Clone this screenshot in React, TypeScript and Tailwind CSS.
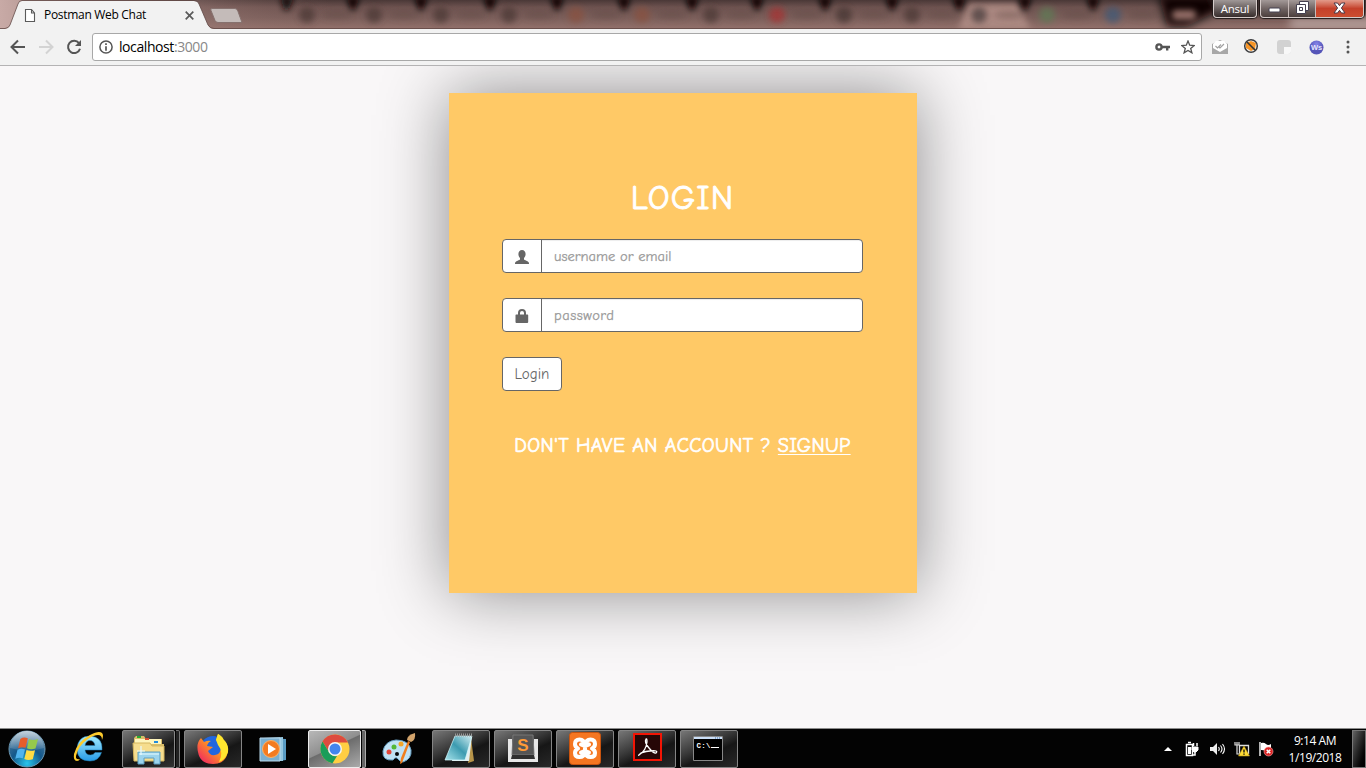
import React from "react";

const ui = "font-['Open_Sans','Noto_Sans',sans-serif]";
const hand = "font-['Comic_Sans_MS','Comic_Neue',Lato,sans-serif]";

const notches = [53, 121, 190, 257, 324, 392, 457, 525, 592, 659, 725, 793];
const tabs = [7, 74, 141, 209, 276, 342, 411, 477, 544, 612, 679, 747, 813];
const tints: Record<number, string> = { 276: "#8a513f", 342: "#89513f", 477: "#a83030", 747: "#5f7a55", 813: "#3f5a78", 679: "#4a3c3c", 544: "#453431" };

function Glass() {
  return (
    <svg className="absolute inset-0" width="1366" height="29" viewBox="0 0 1366 29">
      <defs>
        <linearGradient id="glass" x1="0" y1="0" x2="0" y2="1">
          <stop offset="0" stopColor="#4a3837" />
          <stop offset=".25" stopColor="#6e5350" />
          <stop offset=".6" stopColor="#7a5e5a" />
          <stop offset="1" stopColor="#93716b" />
        </linearGradient>
        <linearGradient id="leftGlow">
          <stop offset="0" stopColor="#c8aaa6" />
          <stop offset="1" stopColor="#8a6964" stopOpacity="0" />
        </linearGradient>
        <filter id="b3" x="-80%" y="-80%" width="260%" height="260%"><feGaussianBlur stdDeviation="3" /></filter>
        <filter id="b5" x="-50%" y="-80%" width="200%" height="260%"><feGaussianBlur stdDeviation="5" /></filter>
      </defs>
      <rect width="1366" height="29" fill="url(#glass)" />
      <rect width="330" height="29" fill="url(#leftGlow)" />
      <g transform="translate(300 0)">
        <path d="M658 30L669 4h48l14 26z" fill="#ac8982" filter="url(#b3)" />
        {tabs.map((x) => (
          <g key={x} filter="url(#b3)" opacity=".75">
            <circle cx={x} cy="15" r="8" fill={tints[x] ?? "#4b3836"} />
            <ellipse cx={x + 30} cy="15" rx="15" ry="4" fill="#5b4542" opacity=".5" />
          </g>
        ))}
        {notches.map((x) => <path key={x} d={`M${x - 7}-3h14l-5 13h-4z`} fill="#0d0505" filter="url(#b3)" />)}
        <path d="M-20-4H-6L-11 10H-16z" fill="#160b0a" filter="url(#b3)" />
      </g>
      <path d="M1159-4h60v14l-32 16h-20z" fill="#0a0504" filter="url(#b5)" />
      <rect x="1172" y="10" width="24" height="10" rx="4" fill="#967069" filter="url(#b3)" />
      <path d="M1210-4h160v18h-145z" fill="#443634" filter="url(#b5)" />
      <rect x="1290" y="18" width="90" height="12" fill="#b39d99" filter="url(#b5)" />
      <path d="M0 29H5Q9 28 10 25L18 4Q19 1 22 1H194Q198 1 199 4L208 25Q210 29 214 29z" fill="#f2f2f2" />
      <path d="M0 28.5H5Q9 28 10 25L18 4Q19 .5 22 .5H194Q198 .5 199 4L208 25Q210 28.5 214 28.500H1366" fill="none" stroke="#5c4442" strokeOpacity=".75" />
      <path d="M212 8.500h23q2 0 3 3l4 11h-24q-2 0-3-2l-4-10q-1-2 1-2z" fill="#c4bbb9" stroke="#86716e" />
    </svg>
  );
}

function TitleBar() {
  return (
    <div className="relative flex h-[29px] shrink-0 overflow-hidden">
      <Glass />
      <div className="relative flex w-[220px] items-center pl-6 pt-[1px]">
        <svg width="12" height="15" viewBox="0 0 12 15" fill="#fff" stroke="#5a5a5a" strokeWidth="1.1"><path d="M1.5 1.5h6l3 3.5v8.500h-9zM7.500 1.500V5h3" /></svg>
        <span className="ml-2 w-[110px] whitespace-nowrap text-[12px] leading-4 tracking-[-0.3px] text-black">Postman Web Chat</span>
        <svg className="ml-[31px]" width="9" height="9" viewBox="0 0 9 9" stroke="#5a5a5a" strokeWidth="1.700"><path d="M.7.7l7.600 7.600M8.300.7L.7 8.300" /></svg>
      </div>
      <div className="relative ml-auto flex h-[18px] pr-[2px] text-white">
        <div className="mr-[3px] flex w-[44px] items-center justify-center rounded-b border border-t-0 border-[#d5cbc9] bg-gradient-to-b from-[#a09897] to-[#382e2d] shadow-[0_0_1px_1px_#211a19] text-[11.5px] leading-none tracking-[-0.3px]">Ansul</div>
        <div className="flex w-[104px] overflow-hidden rounded-b border border-t-0 border-[#d5cbc9] bg-gradient-to-b from-[#a39998] via-[#716564] to-[#4b3e3c] shadow-[0_0_1px_1px_#211a19]">
          <div className="flex w-[28px] items-center justify-center border-r border-[#c6b9b7] pt-[3px]">
            <svg width="13" height="6"><rect x="1" y="1" width="11" height="4" rx="1" fill="#fff" stroke="#454050" /></svg>
          </div>
          <div className="flex w-[27px] items-center justify-center border-r border-[#c6b9b7] pb-[2px]">
            <svg width="13" height="13" viewBox="0 0 13 13" fill="#fff" stroke="#454050"><path d="M3.500.5h9v9h-9z" /><path fillRule="evenodd" d="M.5 3.500h9v9h-9zM3.500 6.500h3v3h-3z" /></svg>
          </div>
          <div className="flex flex-1 items-center justify-center bg-gradient-to-b from-[#e29a8a] via-[#c4402a] to-[#cb4d30] pb-[2px]">
            <svg width="13" height="12" viewBox="0 0 13 12"><path d="M1 1h3.500l2 2.700L8.500 1H12L8.400 6 12 11H8.500l-2-2.700L4.500 11H1l3.600-5z" fill="#fff" stroke="#4a3b4a" /></svg>
          </div>
        </div>
      </div>
    </div>
  );
}

function Toolbar() {
  return (
    <div className="flex h-[37px] shrink-0 items-center border-b border-[#b4b3b4] bg-[#f2f2f2] pr-[11px] pl-[10px]">
      <svg width="16" height="16" viewBox="0 0 16 16" fill="none" stroke="#555" strokeWidth="2"><path d="M15 8H2M8 1.500L1.500 8 8 14.500" /></svg>
      <svg className="ml-3" width="16" height="16" viewBox="0 0 16 16" fill="none" stroke="#d3d3d3" strokeWidth="2"><path d="M1 8h13M8 1.500L14.500 8 8 14.500" /></svg>
      <svg className="ml-3" width="16" height="16" viewBox="0 0 16 16"><path d="M13 4.200A6.100 6.100 0 1 0 14 9.700" fill="none" stroke="#555" strokeWidth="2" /><path d="M15 1v6H9z" fill="#555" /></svg>
      <div className="ml-[10px] flex h-[28px] w-[1110px] items-center rounded-[3px] border border-[#a8a8a8] bg-white pl-[6px] pr-[6px]">
        <svg width="14" height="14" viewBox="0 0 14 14" fill="none" stroke="#555" strokeWidth="1.500"><circle cx="7" cy="7" r="6.100" /><path d="M7 3.300v1.600M7 6.200v4.600" strokeWidth="1.700" /></svg>
        <span className="ml-[6px] text-[14px] leading-5 tracking-[-0.42px] text-black">localhost<span className="text-[#888]">:3000</span></span>
        <svg className="ml-auto" width="15" height="8" viewBox="0 0 15 8" fill="none" stroke="#555"><circle cx="4" cy="4" r="2.600" strokeWidth="2.400" /><path d="M7 4h8M12.200 4v3.500" strokeWidth="2.400" /></svg>
        <svg className="ml-[11px]" width="14" height="14" viewBox="0 0 14 14" fill="none" stroke="#555" strokeWidth="1.300"><path d="M7 1l1.700 4.200 4.500.3-3.500 2.900 1.200 4.400L7 10.400l-3.900 2.400 1.200-4.400L.8 5.500l4.500-.3z" /></svg>
      </div>
      <svg className="ml-[10px]" width="16" height="15" viewBox="0 0 16 15"><path d="M0 4l8-4 8 4v10H0z" fill="#a7a7a7" /><path d="M1 4l3-3h8l3 3v4l-7 4-7-4z" fill="#fff" /><path d="M3.500 6l2 2L9 4.500M7 7l1 1 4-4" fill="none" stroke="#a0a0a0" strokeWidth="1.200" /></svg>
      <svg className="ml-[15px] mb-[2px]" width="16" height="16" viewBox="0 0 16 16"><path d="M3 5l5-2 5 2-1 6-4 2-5-3z" fill="#f79526" /><circle cx="8" cy="8" r="6.300" fill="none" stroke="#3b3c3e" strokeWidth="1.500" /><path d="M4 4l8 8" stroke="#333" strokeWidth="1.600" /></svg>
      <svg className="ml-[18px]" width="15" height="14" viewBox="0 0 15 14"><rect width="14" height="14" rx="3" fill="#d2d2d2" /><path d="M7 7h7v4q0 3-3 3H7z" fill="#f8f8f8" /></svg>
      <svg className="ml-[17px]" width="15" height="15" viewBox="0 0 15 15"><defs><radialGradient id="ws" cy=".25"><stop stopColor="#8585e9" /><stop offset="1" stopColor="#5555b8" /></radialGradient></defs><circle cx="7.500" cy="7.500" r="7" fill="url(#ws)" /><text x="7.500" y="10.300" textAnchor="middle" fontFamily="Liberation Sans" fontWeight="bold" fontSize="7.500" fill="#e6e6ff">Ws</text></svg>
      <svg className="ml-auto mr-[5px]" width="4" height="14" viewBox="0 0 4 14" fill="#555"><circle cx="2" cy="2" r="1.500" /><circle cx="2" cy="7" r="1.500" /><circle cx="2" cy="12" r="1.500" /></svg>
    </div>
  );
}

function Field({ icon, type, placeholder, tracking }: { icon: React.ReactNode; type: string; placeholder: string; tracking: string }) {
  return (
    <div className="mb-[25px] flex h-[34px] overflow-hidden rounded-[4px] border border-[#666] bg-white">
      <div className="flex w-[39px] shrink-0 items-center justify-center border-r border-[#666] pt-[2px]">{icon}</div>
      <input type={type} placeholder={placeholder} className={`min-w-0 flex-1 pl-3 pt-px text-[14.5px] text-[#666] shadow-[inset_0_1px_1px_rgba(0,0,0,.075)] outline-none [-webkit-text-stroke:0.25px_#999] placeholder:text-[#999] ${tracking}`} />
    </div>
  );
}

function LoginCard() {
  return (
    <main className="flex min-h-0 flex-1 items-start justify-center overflow-hidden bg-[#f9f7f8] pt-[27px]">
      <section className={`h-[500px] w-[468px] bg-[#ffc966] pl-[53px] pr-[54px] pt-[85px] shadow-[0_0_64px_rgba(0,0,0,.44)] ${hand}`}>
        <h1 className="mb-[21px] text-center text-[34px] leading-10 tracking-[1.1px] text-white [-webkit-text-stroke:0.9px_#fff]">LOGIN</h1>
        <Field type="text" placeholder="username or email" tracking="tracking-[0px]" icon={<svg width="14" height="14" viewBox="0 0 14 14" fill="#666"><path d="M7 0c2.200 0 3.600 1.700 3.600 4 0 1.700-.7 3.200-1.600 4.100v1.300c.4.7 4.100 1.400 4.800 3 .2.5.2 1 .2 1.600H0c0-.6 0-1.100.2-1.600.7-1.600 4.400-2.300 4.800-3V8.100C4.100 7.200 3.400 5.700 3.400 4 3.400 1.700 4.800 0 7 0z" /></svg>} />
        <Field type="password" placeholder="password" tracking="tracking-[0.5px]" icon={<svg width="14" height="14" viewBox="0 0 14 14" fill="#666"><path fillRule="evenodd" d="M3 5.500V4q0-4 4-4t4 4v1.500h1.500q.7 0 .7.700V13q0 1-1 1H1.500q-1 0-1-1V6.200q0-.7.7-.7zM5 5.500h4V4q0-2-2-2T5 4z" /></svg>} />
        <button className="block h-[34px] w-[60px] rounded-[4px] border border-[#666] bg-white pt-px text-[15px] text-[#666]">Login</button>
        <div className="-mx-4 mt-[42px] whitespace-nowrap text-center text-[20px] leading-[26px] tracking-[0.33px] text-white [-webkit-text-stroke:0.65px_#fff]">DON'T HAVE AN ACCOUNT ? <a className="underline decoration-1 underline-offset-[2px]">SIGNUP</a></div>
      </section>
    </main>
  );
}

const taskFrame = "flex h-[38px] w-[58px] items-center justify-center rounded-[2px] border border-[#858585] bg-[linear-gradient(155deg,#777_0%,#393939_40%,#161616_60%,#282828_100%)]";

function Task({ children, stack = false, active = false, open = true }: { children: React.ReactNode; stack?: boolean; active?: boolean; open?: boolean }) {
  if (!open) return <div className="flex h-[38px] w-[58px] items-center justify-center">{children}</div>;
  if (stack)
    return (
      <div className="flex h-[38px] w-[58px] gap-px">
        <div className={`flex w-[53px] items-center justify-center rounded-[2px] border ${active ? "border-[#ededed] bg-[linear-gradient(155deg,#b8b8b8_0%,#8f8f8f_45%,#6c6c6c_47%,#aaa_100%)]" : "border-[#888] bg-[linear-gradient(155deg,#777_0%,#393939_40%,#161616_60%,#333_100%)]"}`}>{children}</div>
        <div className={`w-1 rounded-r-[2px] border border-l-0 ${active ? "border-[#ababab] bg-[#666]" : "border-[#777] bg-[#222]"}`} />
      </div>
    );
  return <div className={taskFrame}>{children}</div>;
}

function StartOrb() {
  return (
    <svg className="ml-2 mr-[14px]" width="38" height="38" viewBox="0 0 38 38">
      <defs>
        <radialGradient id="orb" cx=".5" cy=".9" r=".85"><stop stopColor="#29c5ec" /><stop offset=".5" stopColor="#14588b" /><stop offset="1" stopColor="#4f7b9c" /></radialGradient>
        <linearGradient id="shine" x1="0" y1="0" x2="0" y2="1"><stop stopColor="#fff" stopOpacity=".65" /><stop offset="1" stopColor="#fff" stopOpacity=".08" /></linearGradient>
      </defs>
      <circle cx="19" cy="19" r="18" fill="url(#orb)" stroke="#6d99b3" />
      <path d="M2 18a17 17 0 0 1 34 0q-16 5-34 0z" fill="url(#shine)" />
      <path d="M12.300 9q3.500-2.500 7.500-.7l-2.200 9.500q-3.500-1.500-7.500.5z" fill="#e65c2b" />
      <path d="M21 9q3.500 1.800 9 0l-2.500 9.500q-5 1.500-8.500-.2z" fill="#95c94c" />
      <path d="M9.500 19.800q3.500-2 7.500-.4l-2.200 8.900q-3.500-1.400-7.500.5z" fill="#50b4ef" />
      <path d="M18.500 20q3.500 1.500 8.500.2l-2.200 9q-5 1.500-8.500-.3z" fill="#ffdc44" />
    </svg>
  );
}

function Taskbar() {
  return (
    <footer className={`flex h-10 shrink-0 items-center border-t border-[#8b8b8b] bg-[#030303] text-white ${ui}`}>
      <StartOrb />
      <div className="flex gap-1">
        <Task open={false}>
          <svg className="mb-[3px]" width="34" height="34" viewBox="0 0 34 34"><defs><linearGradient id="ie" x1="0" y1="0" x2="0" y2="1"><stop stopColor="#a3ecff" /><stop offset="1" stopColor="#279be7" /></linearGradient></defs><path fillRule="evenodd" d="M30 20H13q.5 5 5.500 5 3 0 4.500-2.500h6.500Q27 31 18 31 5 31 5 18.500 6 6 18 6q13 1 12 14zM13 15.500h10q-1-5-5-5t-5 5z" fill="url(#ie)" stroke="#207eb5" strokeWidth=".5" /><path d="M5 31Q1 31 2 24 5 12 18 5 27 0 30 3q2 2 0 7 0-5-4-5-4 0-10 4Q6 16 4 26q-.5 4 4 3-1 2-3 2z" fill="#fdcb2d" /></svg>
        </Task>
        <Task stack>
          <svg width="34" height="32" viewBox="0 0 34 32"><path d="M2 5l2-2h8l2 3h16v5h2v16H2z" fill="#d9bd69" /><path d="M3 6h26v5H3z" fill="#fff5bc" /><path d="M5 3h4v2H5z" fill="#28aa32" /><path d="M13 5h4v2h-4z" fill="#d64b30" /><path d="M22 8h4v2h-4z" fill="#238cdd" /><path d="M1 10h17l2 3h12v15H2z" fill="#f6dd8e" stroke="#d5b760" /><path d="M6 31V19h22v12h-6v-6H12v6z" fill="#9cd4ed" stroke="#5d9fc2" /><path d="M7 21h20M9 13v9M5 18h8" stroke="#e8fbff" strokeWidth="1.200" /></svg>
        </Task>
        <Task>
          <svg width="32" height="32" viewBox="0 0 32 32"><defs><linearGradient id="ff" x1="1" y1="0" x2="0" y2="1"><stop stopColor="#fff42b" /><stop offset=".45" stopColor="#ff9720" /><stop offset="1" stopColor="#ee126f" /></linearGradient></defs><circle cx="16" cy="16" r="13" fill="#2267df" /><path d="M4 5l3 4q4-2 7-1-3 1-4 5l6 1-5 4q2 5 7 4 6-1 6-8 0-4-5-7l2-6q3 1 5 6l2 1q3 5 3 10-2 13-15 13Q3 31 1 19-1 10 4 5z" fill="url(#ff)" /><path d="M19 7l2-6q4 2 6 6 5 5 4 12-3 8-9 10 5-10-1-17z" fill="#ffe62f" /></svg>
        </Task>
        <Task open={false}>
          <svg className="mr-1" width="28" height="28" viewBox="0 0 28 28"><path d="M8 3l19 1v21l-7 1z" fill="#5a9cc4" /><path d="M4 3l20-1v24H4z" fill="#95c7e0" /><path d="M1 3h20v23H1z" fill="#7aafd0" stroke="#badaec" /><circle cx="12" cy="14" r="8.500" fill="#f37b20" stroke="#fbb267" /><path d="M9 9l8 5-8 5z" fill="#fff" /></svg>
        </Task>
        <Task stack active>
          <svg width="30" height="30" viewBox="0 0 30 30"><circle cx="15" cy="15" r="14.500" fill="#ffce43" /><path d="M2.500 7.500A14.500 14.500 0 0 1 28 8.500H15L9 18z" fill="#dd4b3f" /><path d="M2.500 7.500L9 18q3 5 8 4l-4.500 7.300A14.500 14.500 0 0 1 2.500 7.500z" fill="#1a9d59" /><circle cx="15" cy="15" r="7" fill="#f5f5f5" /><circle cx="15" cy="15" r="5.500" fill="#4285ed" /></svg>
        </Task>
        <Task open={false}>
          <svg width="34" height="34" viewBox="0 0 34 34"><path d="M14 8Q3 9 1 19q-1 10 10 9 3-4 5-1t5 3q9-3 8-12Q27 8 14 8z" fill="#c0e2f5" stroke="#6aa2c6" /><circle cx="7" cy="20" r="2.500" fill="#e44639" /><circle cx="12" cy="15" r="2.500" fill="#54b838" /><circle cx="19" cy="12" r="2.500" fill="#f3a529" /><circle cx="15" cy="22" r="2" fill="#08080b" /><path d="M28 10l-8 21-2 1 1-6 7-17z" fill="#f07e1d" /><path d="M25 8q0-5 8-7 1 7-4 9z" fill="#d2a36b" /></svg>
        </Task>
        <Task>
          <svg className="mr-[3px] mb-[2px]" width="33" height="32" viewBox="0 0 33 32"><defs><linearGradient id="np" x1="1" y1="0" x2="0" y2="1"><stop stopColor="#d3eef2" /><stop offset=".5" stopColor="#3c9bb0" /><stop offset="1" stopColor="#a9e4ec" /></linearGradient></defs><path d="M28 6l3 23-6 2z" fill="#b69449" /><path d="M12 4h17l-3 25H9z" fill="#e3eff0" /><path d="M12 4h17l-7 24H2z" fill="url(#np)" stroke="#d6fbff" strokeWidth=".7" /><path d="M12 3h17" stroke="#999" strokeWidth="3" strokeDasharray="1 1" /></svg>
        </Task>
        <Task>
          <svg width="32" height="30" viewBox="0 0 32 30"><path d="M1 5h4v18h22V5h4v23H1z" fill="#e7e7e7" /><path d="M6 1h20l1 20H5z" fill="#565656" stroke="#777" /><path d="M5 21h22l1 4H4z" fill="#303030" /><text x="16" y="17" textAnchor="middle" fontFamily="Liberation Sans" fontWeight="bold" fontSize="17" fill="#ff9a37">S</text></svg>
        </Task>
        <Task>
          <svg width="33" height="33" viewBox="0 0 33 33"><rect x=".5" y=".5" width="31" height="32" rx="3" fill="#f57621" stroke="#c8540f" /><path d="M15 12q0-4.500-4.500-4.500T6 12q0 3 3 4.500-3 1.500-3 4.500Q6 25 10.500 25T15 21M17 12q0-4.500 4.500-4.500T26 12q0 3-3 4.500 3 1.500 3 4.500 0 4-4.500 4T17 21M12 12.500q4 2 8 0M12 20.500q4-2 8 0M12 12.500v0M20 12.500v0M16 12v9" fill="none" stroke="#fff" strokeWidth="4" strokeLinejoin="round" strokeLinecap="round" /></svg>
        </Task>
        <Task>
          <svg className="mb-1" width="29" height="28" viewBox="0 0 29 28"><path d="M1 1h27v26H1z" fill="#260707" stroke="#f21505" strokeWidth="2" /><path d="M6 22q7-4 8-13 0-4-1-3-2 3 3 9t7 5q3-3-6-2T7 21q-2 2-1 1z" fill="none" stroke="#fff" strokeWidth="1.300" /></svg>
        </Task>
        <Task>
          <svg className="mr-[3px] mb-[1px]" width="30" height="25" viewBox="0 0 30 25"><path d="M.5.5h29v24H.5z" fill="#000" stroke="#888" /><path d="M1 1h28v2H1z" fill="#cbdff8" /><path d="M22 2h6" stroke="#4370a5" strokeDasharray="1 1" /><text x="3.500" y="12" fontFamily="Liberation Mono" fontSize="7.500" fontWeight="bold" fill="#fff" textLength="14">C:\</text><path d="M18 11.500h8" stroke="#fff" /></svg>
        </Task>
      </div>
      <div className="ml-auto flex h-full items-center">
        <svg width="8" height="4" viewBox="0 0 8 4"><path d="M0 4l4-4 4 4z" fill="#fff" /></svg>
        <svg className="ml-[13px]" width="15" height="16" viewBox="0 0 15 16" fill="none" stroke="#fff"><path d="M3 1.500h3M1.500 3.500h6v11h-6z" strokeWidth="1.500" /><path d="M3 6h3v7H3z" fill="#fff" stroke="none" /><path d="M7 6h6v3l-2 2H9L7 9z" fill="#fff" /><path d="M8.500 5V2M12 5V2M10 10v4H7" strokeWidth="1.500" /></svg>
        <svg className="ml-[9px]" width="17" height="14" viewBox="0 0 17 14"><path d="M1 5h3l4-4v12L4 9H1z" fill="#eee" /><path d="M9.500 5q1.500 2 0 4M11.500 3.500q3 3.500 0 7M13.500 2q4 5 0 10" fill="none" stroke="#fff" strokeWidth="1.100" /></svg>
        <svg className="ml-[8px]" width="16" height="16" viewBox="0 0 16 16"><path d="M5.500 4.500h9v8h-9z" fill="none" stroke="#ddd" strokeWidth="1.300" /><path d="M1 1v3h4V1M3 1v12h3" fill="none" stroke="#ddd" strokeWidth="1.200" /><path d="M10 5l5.500 10h-11z" fill="#ffdc35" stroke="#b39018" strokeWidth=".6" /><path d="M10 8.500v3M10 12.500v1.300" stroke="#111" strokeWidth="1.400" /></svg>
        <svg className="ml-[8px]" width="16" height="16" viewBox="0 0 16 16"><path d="M2 1v14" stroke="#eee" strokeWidth="1.500" /><path d="M3 2q3-1 5 1t5 0v7q-3 1-5 0t-5-1z" fill="#fff" /><circle cx="10.500" cy="10.500" r="4.500" fill="#dc2525" stroke="#ffaaaa" strokeWidth=".6" /><path d="M8.700 8.700l3.600 3.600m0-3.600l-3.600 3.600" stroke="#fff" strokeWidth="1.500" /></svg>
        <div className="ml-[10px] flex w-[62px] flex-col items-center text-[12px] leading-[17px] tracking-[-0.45px]"><span>9:14 AM</span><span>1/19/2018</span></div>
        <div className="ml-[6px] h-[38px] w-[14px] border border-[#777] bg-gradient-to-br from-[#656565] via-[#222] to-black" />
      </div>
    </footer>
  );
}

export default function App() {
  return (
    <div className={`flex h-[768px] w-[1366px] flex-col overflow-hidden ${ui}`}>
      <TitleBar />
      <Toolbar />
      <LoginCard />
      <Taskbar />
    </div>
  );
}
